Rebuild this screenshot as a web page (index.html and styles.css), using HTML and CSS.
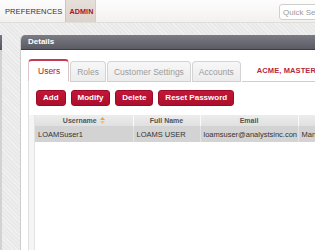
FILE: index.html
```html
<!DOCTYPE html>
<html>
<head>
<meta charset="utf-8">
<link rel="stylesheet" href="styles.css">
</head>
<body>
<div class="nav">
  <div class="nav-item">PREFERENCES</div>
  <div class="nav-item active">ADMIN</div>
  <div class="search">Quick Search</div>
</div>
<div class="main">
  <div class="side">
    <div class="side-head"></div>
  </div>
  <div class="panel">
    <div class="panel-head">Details</div>
    <div class="panel-body">
      <div class="tabs">
        <div class="tab on">Users</div>
        <div class="tab">Roles</div>
        <div class="tab">Customer Settings</div>
        <div class="tab">Accounts</div>
        <div class="tab-fill"><span class="org">ACME, MASTER</span></div>
      </div>
      <div class="tab-content">
        <div class="toolbar">
          <button class="btn">Add</button>
          <button class="btn">Modify</button>
          <button class="btn">Delete</button>
          <button class="btn">Reset Password</button>
        </div>
        <div class="grid-row">
          <div class="gutter"></div>
          <div class="grid">
            <table>
              <colgroup><col class="c1"><col class="c2"><col class="c3"><col class="c4"></colgroup>
              <thead>
                <tr><th>Username <svg class="sort" width="5" height="7" viewBox="0 0 5 7"><path d="M2.5 0 L5 3 H0 Z" fill="#f0a030"/><path d="M0 4 H5 L2.5 7 Z" fill="#f7c070"/></svg></th><th>Full Name</th><th>Email</th><th></th></tr>
              </thead>
              <tbody>
                <tr class="sel"><td>LOAMSuser1</td><td>LOAMS USER</td><td>loamsuser@analystsinc.con</td><td>Manager</td></tr>
              </tbody>
            </table>
          </div>
        </div>
      </div>
    </div>
  </div>
</div>
</body>
</html>
```
FILE: styles.css
```css
html, body {
  margin: 0;
  padding: 0;
}
body {
  width: 315px;
  height: 250px;
  overflow: hidden;
  font-family: "Liberation Sans", Arial, sans-serif;
  background-color: #e9e9e9;
  background-image: repeating-linear-gradient(45deg, rgba(255,255,255,0.35) 0 1px, transparent 1px 3px);
}
.nav {
  display: flex;
  align-items: stretch;
  height: 23px;
  background: linear-gradient(#fdfdfd, #f3f1ef);
  border-bottom: 1px solid #e0dcd8;
  box-sizing: border-box;
}
.nav-item {
  display: flex;
  align-items: center;
  padding: 0 3px 0 5px;
  font-size: 7.5px;
  color: #333;
  letter-spacing: 0.1px;
}
.nav-item.active {
  background: linear-gradient(#e6dfda, #dcd3cc);
  border-left: 1px solid #cfc5be;
  border-right: 1px solid #d6cdc6;
  color: #a8102c;
  font-weight: bold;
  padding: 0 2px 0 3px;
  font-size: 7.2px;
}
.search {
  margin-left: auto;
  margin-right: -16px;
  margin-top: 4px;
  width: 52px;
  height: 16px;
  box-sizing: border-box;
  background: #fff;
  border: 1px solid #cfcfcf;
  border-radius: 3px;
  font-size: 8px;
  color: #9a9a9a;
  padding: 3px 0 0 3px;
  white-space: nowrap;
  overflow: hidden;
}
.main {
  display: flex;
  margin-top: 12px;
  height: 215px;
}
.side {
  width: 2px;
  background: #d2d2d2;
}
.side-head {
  height: 15px;
  background: linear-gradient(#77777f, #55555d);
}
.panel {
  margin-left: 18px;
  flex: 1;
  display: flex;
  flex-direction: column;
  background: #fff;
  border-left: 1px solid #cdcdcd;
  border-top-left-radius: 5px;
  overflow: hidden;
}
.panel-head {
  height: 15px;
  box-sizing: border-box;
  background: linear-gradient(#7b7b83, #5b5b63);
  border-bottom: 1px solid #3c3c42;
  color: #fff;
  font-weight: bold;
  font-size: 8px;
  line-height: 14px;
  padding-left: 7px;
}
.panel-body {
  flex: 1;
  display: flex;
  flex-direction: column;
  padding: 9px 0 0 7px;
}
.tabs {
  display: flex;
  align-items: flex-end;
  height: 23px;
}
.tab {
  height: 21px;
  box-sizing: border-box;
  padding: 0 6px;
  margin-right: 1px;
  font-size: 8.5px;
  color: #9c9c9c;
  line-height: 20px;
  background: linear-gradient(#f7f7f7, #ececec);
  border: 1px solid #d4d4d4;
  border-bottom: 1px solid #cfcfcf;
  border-radius: 4px 4px 0 0;
  white-space: nowrap;
}
.tab.on {
  height: 23px;
  margin-right: 1px;
  line-height: 21px;
  padding: 0 8px 0 9px;
  background: #fff;
  color: #b0102e;
  border: 1px solid #dcc4c8;
  border-top: 2px solid #c43a52;
  border-bottom: 1px solid #fff;
}
.tab-fill {
  flex: 1;
  align-self: stretch;
  border-bottom: 1px solid #cfcfcf;
  display: flex;
  align-items: center;
  padding-left: 15px;
  white-space: nowrap;
}
.org {
  font-size: 7.5px;
  font-weight: bold;
  color: #b4283f;
  letter-spacing: 0.1px;
}
.tab-content {
  flex: 1;
  display: flex;
  flex-direction: column;
  border-left: 1px solid #e0e0e0;
}
.toolbar {
  display: flex;
  gap: 5px;
  padding: 8px 0 9px 7px;
}
.btn {
  height: 16px;
  padding: 0 6px;
  margin: 0;
  border: 1px solid #9a0c24;
  border-radius: 3px;
  background: linear-gradient(#c4163a, #ab0f2c);
  color: #fff;
  font-family: "Liberation Sans", Arial, sans-serif;
  font-weight: bold;
  font-size: 8px;
  line-height: 14px;
  white-space: nowrap;
}
.grid-row {
  flex: 1;
  display: flex;
}
.gutter {
  width: 5px;
  background: #f5f5f5;
  border-right: 1px solid #e4e4e4;
}
.grid {
  flex: 1;
  overflow: hidden;
}
table {
  border-collapse: collapse;
  table-layout: fixed;
  width: 364px;
}
.c1 { width: 98px; }
.c2 { width: 67px; }
.c3 { width: 98px; }
.c4 { width: 101px; }
th {
  height: 11px;
  padding: 0;
  font-size: 7px;
  font-weight: bold;
  color: #555;
  background: linear-gradient(#ececec, #e0e0e0);
  border-right: 1px solid #fafafa;
  text-align: center;
  white-space: nowrap;
  line-height: 11px;
}
.sort {
  vertical-align: -1px;
  margin-left: 1px;
}
td {
  height: 16px;
  padding: 0 3px;
  font-size: 7.5px;
  color: #333;
  white-space: nowrap;
  overflow: hidden;
  background: #d3d3d3;
  border-right: 1px solid #e2e2e2;
}
```
